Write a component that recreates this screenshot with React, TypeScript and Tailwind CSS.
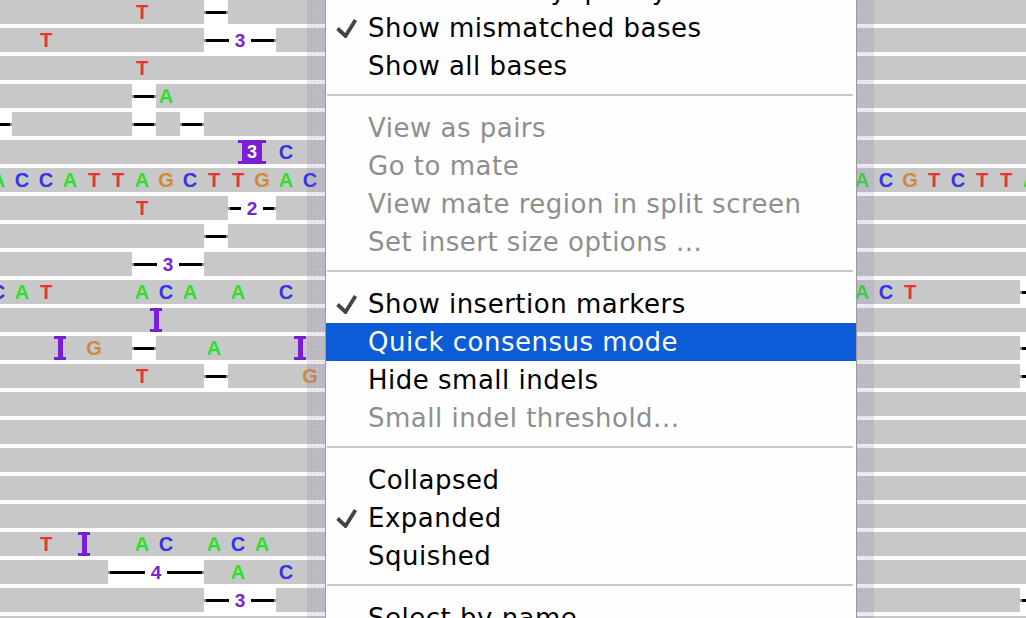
import React from "react";

const N = 44;

const consensus = "ACCATTAGCTTGAC" + ".".repeat(22) + "ACGTCTTA";

const rowsRaw: string[] = [
  "......T..-",
  "..T......3",
  "......T",
  "......-A",
  "-.....-.-",
  "...........^3.C",
  consensus,
  "......T...2",
  ".........-",
  "......3",
  "CAT...ACA.A.C" + ".".repeat(23) + "ACT....-",
  ".......I",
  "...I.G.-..A...I" + ".".repeat(30) + "-",
  "......T..-...G" + ".".repeat(29) + "-",
  "",
  "",
  "",
  "",
  "",
  "..T.I..AC.ACA",
  ".....4.A.C",
  "........." + "3" + ".".repeat(31) + "-",
  "",
];

type Tok =
  | { k: "cell"; c: string }
  | { k: "del"; n: number; label: boolean }
  | { k: "ins" }
  | { k: "box"; n: number };

function parse(s: string): Tok[] {
  const out: Tok[] = [];
  let cells = 0;
  let i = 0;
  while (i < s.length) {
    const ch = s[i];
    if (ch === "." || "ACGT".includes(ch)) {
      out.push({ k: "cell", c: ch });
      cells += 1;
      i += 1;
    } else if (ch === "-") {
      out.push({ k: "del", n: 1, label: false });
      cells += 1;
      i += 1;
    } else if (ch >= "0" && ch <= "9") {
      const n = parseInt(ch, 10);
      out.push({ k: "del", n, label: true });
      cells += n;
      i += 1;
    } else if (ch === "I") {
      out.push({ k: "ins" });
      i += 1;
    } else if (ch === "^") {
      out.push({ k: "box", n: parseInt(s[i + 1], 10) });
      i += 2;
    } else {
      i += 1;
    }
  }
  while (cells < N) {
    out.push({ k: "cell", c: "." });
    cells += 1;
  }
  return out;
}

const baseColor: Record<string, string> = {
  A: "text-[#2ee02e]",
  C: "text-[#3434e4]",
  G: "text-[#d0883a]",
  T: "text-[#e63434]",
};

function Token({ t }: { t: Tok }) {
  if (t.k === "cell") {
    if (t.c === ".") {
      return <div className="w-6 h-6 shrink-0 bg-[#c8c8c8]" />;
    }
    return (
      <div
        className={`w-6 h-6 shrink-0 bg-[#c8c8c8] flex items-center justify-center pr-1 font-bold text-[20px] leading-none ${baseColor[t.c]}`}
      >
        {t.c}
      </div>
    );
  }
  if (t.k === "del") {
    if (!t.label) {
      return (
        <div className="w-6 h-6 shrink-0 flex items-center">
          <div className="h-[3px] w-full bg-black border-x-2 border-[#8c8c8c]" />
        </div>
      );
    }
    return (
      <div
        className="h-6 shrink-0 flex items-center"
        style={{ width: t.n * 24 }}
      >
        <div className="h-[3px] flex-1 bg-black border-l-2 border-[#8c8c8c]" />
        <span className="px-[6px] font-bold text-[19px] leading-none text-[#7a22d8]">
          {t.n}
        </span>
        <div className="h-[3px] flex-1 bg-black border-r-2 border-[#8c8c8c]" />
      </div>
    );
  }
  if (t.k === "ins") {
    return (
      <div className="w-0 h-6 shrink-0 relative z-10 flex justify-center">
        <div className="w-3 h-6 shrink-0 flex flex-col items-center">
          <div className="w-3 h-[3px] bg-[#7a1fd6]" />
          <div className="w-[5px] flex-1 bg-[#7a1fd6]" />
          <div className="w-3 h-[3px] bg-[#7a1fd6]" />
        </div>
      </div>
    );
  }
  return (
    <div className="w-0 h-6 shrink-0 relative z-10 flex justify-center">
      <div className="w-7 h-6 shrink-0 flex flex-col items-center">
        <div className="w-7 h-[3px] bg-[#7a1fd6]" />
        <div className="w-5 flex-1 bg-[#7a1fd6] flex items-center justify-center font-bold text-[18px] leading-none text-white">
          {t.n}
        </div>
        <div className="w-7 h-[3px] bg-[#7a1fd6]" />
      </div>
    </div>
  );
}

function ReadRow({ s }: { s: string }) {
  const toks = parse(s);
  return (
    <div className="h-6 flex ml-[-12px] shrink-0">
      {toks.map((t, i) => (
        <Token key={i} t={t} />
      ))}
    </div>
  );
}

function Check() {
  return (
    <svg width="21" height="19" viewBox="0 0 21 19" className="shrink-0">
      <polyline
        points="1.5,9.5 9.5,17 19.5,1"
        fill="none"
        stroke="#454545"
        strokeWidth="3.8"
        strokeLinejoin="miter"
      />
    </svg>
  );
}

type Item =
  | { sep: true }
  | {
      sep?: false;
      label: string;
      checked?: boolean;
      disabled?: boolean;
      active?: boolean;
    };

const items: Item[] = [
  { label: "Shade base by quality" },
  { label: "Show mismatched bases", checked: true },
  { label: "Show all bases" },
  { sep: true },
  { label: "View as pairs", disabled: true },
  { label: "Go to mate", disabled: true },
  { label: "View mate region in split screen", disabled: true },
  { label: "Set insert size options ...", disabled: true },
  { sep: true },
  { label: "Show insertion markers", checked: true },
  { label: "Quick consensus mode", active: true },
  { label: "Hide small indels" },
  { label: "Small indel threshold...", disabled: true },
  { sep: true },
  { label: "Collapsed" },
  { label: "Expanded", checked: true },
  { label: "Squished" },
  { sep: true },
  { label: "Select by name..." },
];

function Menu() {
  return (
    <div className="absolute top-0 left-[325px] w-[532px] h-full bg-[#fefefe] border-x border-[#9c9c9c] overflow-hidden font-['DejaVu_Sans',sans-serif]">
      <div className="flex flex-col mt-[-29px]">
        {items.map((it, i) =>
          it.sep ? (
            <div key={i} className="h-6 pt-[9px] pl-px pr-[3px] shrink-0">
              <div className="h-[2px] bg-[#cbcbcb]" />
            </div>
          ) : (
            <div
              key={i}
              className={`h-[38px] shrink-0 flex items-center text-[26px] tracking-[0.5px] leading-none ${
                it.active
                  ? "bg-[#0b5cd6] text-white"
                  : it.disabled
                  ? "text-[#8e8e8e]"
                  : "text-black"
              }`}
            >
              <div className="w-[42px] pl-[10px] shrink-0 flex items-center">
                {it.checked ? <Check /> : null}
              </div>
              <span className="whitespace-nowrap">{it.label}</span>
            </div>
          )
        )}
      </div>
    </div>
  );
}

export default function App() {
  return (
    <div className="relative w-[1026px] h-[618px] overflow-hidden bg-white font-['Liberation_Sans',Arial,sans-serif]">
      <div className="flex flex-col gap-1">
        {rowsRaw.map((r, i) => (
          <ReadRow key={i} s={r} />
        ))}
      </div>
      <div className="absolute top-0 left-[307px] w-[18px] h-full bg-[rgba(130,110,190,0.14)] bg-[repeating-linear-gradient(0deg,rgba(170,150,100,0.07)_0px,rgba(170,150,100,0.07)_2px,transparent_2px,transparent_5px),repeating-linear-gradient(90deg,rgba(110,100,180,0.06)_0px,rgba(110,100,180,0.06)_1px,transparent_1px,transparent_4px)]" />
      <div className="absolute top-0 left-[857px] w-[17px] h-full bg-[rgba(130,110,190,0.14)] bg-[repeating-linear-gradient(0deg,rgba(170,150,100,0.07)_0px,rgba(170,150,100,0.07)_2px,transparent_2px,transparent_5px),repeating-linear-gradient(90deg,rgba(110,100,180,0.06)_0px,rgba(110,100,180,0.06)_1px,transparent_1px,transparent_4px)]" />
      <Menu />
    </div>
  );
}
